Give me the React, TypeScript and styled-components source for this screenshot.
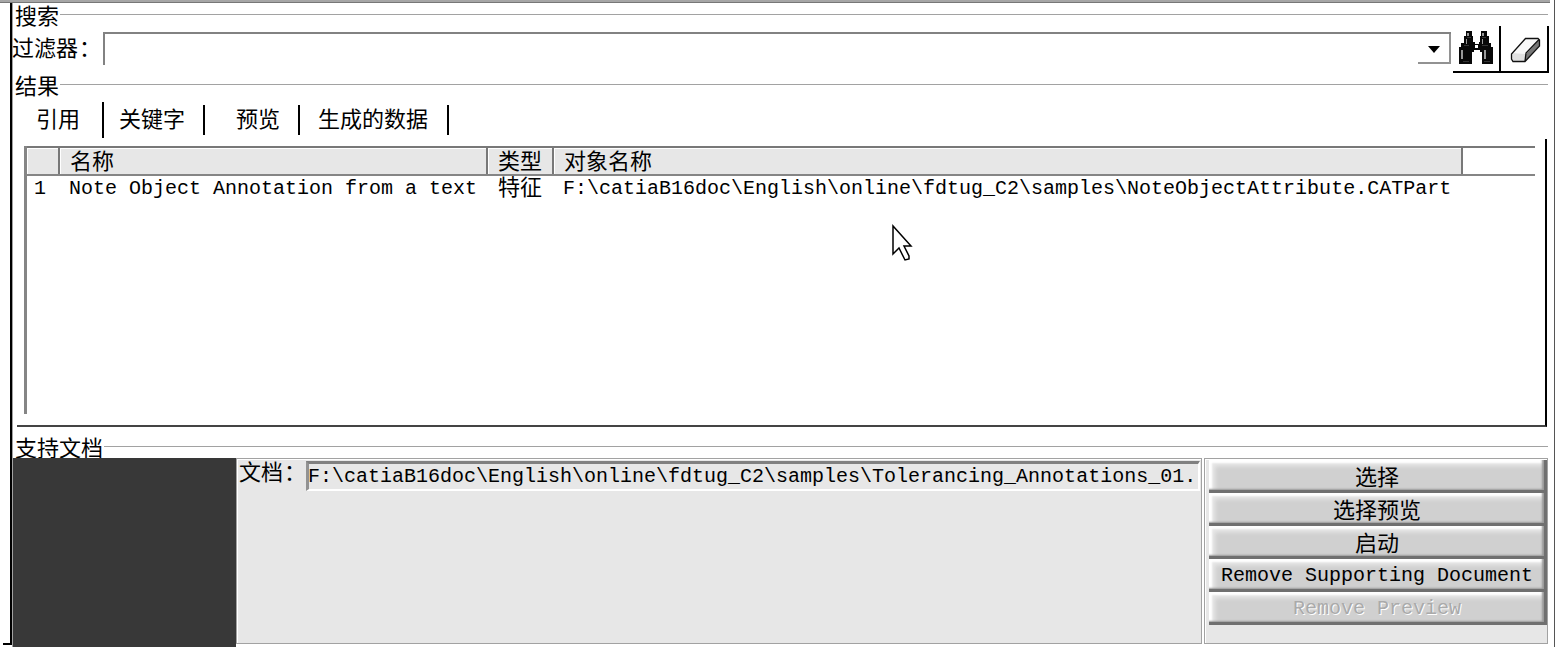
// Documentation search panel - filter bar, result table and supporting document actions
import React, { useState } from 'react';
import styled, { createGlobalStyle, css } from 'styled-components';

const COLORS = {
  face: '#e7e7e7',
  button: '#d0d0d0',
  line: '#a2a2a2',
  shadow: '#787878',
  dark: '#383838',
};

const GlobalStyle = createGlobalStyle`
  * {
    box-sizing: border-box;
  }

  body {
    margin: 0;
    background: #fff;
    color: #000;
    font-family: 'Liberation Mono', 'Noto Sans CJK SC', monospace;
    font-size: 20px;
    line-height: 22px;
    overflow: hidden;
  }
`;

// Window frame
const Window = styled.div`
  position: relative;
  width: 1555px;
  height: 647px;
  padding-left: 10px;
  border-right: 1px solid #555;
  overflow: hidden;
`;

const TopEdge = styled.div`
  height: 3px;
  margin: 0 4px 0 -10px;
  background: #a6a6a6;
  border-bottom: 1px solid #777;
`;

const Content = styled.div`
  height: 644px;
  padding-right: 6px;
  border-left: 2px solid #000;
  box-shadow: inset 1px 0 0 ${COLORS.line};
`;

const FrameCorner = styled.div`
  position: absolute;
  left: 3px;
  top: 643px;
  width: 9px;
  height: 4px;
  border-top: 2px solid #000;
  background: #fff;
`;

// CJK text is slightly larger than the latin text
const Cjk = styled.span`
  display: block;
  font-family: 'Noto Sans CJK SC', sans-serif;
  font-size: 22px;
  line-height: 18px;
  white-space: nowrap;
`;

const Colon = styled.span`
  margin-left: 1px;
`;

// Section title with a rule on the right
const SectionTitle = styled.div<{ $height: number; $gap?: number }>`
  display: flex;
  align-items: flex-start;
  height: ${({ $height }) => $height}px;
  padding: 2px 0 0 3px;
  margin-top: ${({ $gap = 0 }) => $gap}px;

  &::after {
    content: '';
    flex: 1;
    height: 1px;
    margin: 9px 0 0 1px;
    background: ${COLORS.line};
  }
`;

// Filter row
const FilterRow = styled.div`
  display: flex;
  height: 47px;
  margin-right: -1px;
`;

const FilterLabel = styled(Cjk)`
  width: 91px;
  padding: 11px 0 0 0;
`;

const ComboBox = styled.div`
  display: flex;
  justify-content: flex-end;
  width: 1348px;
  height: 33px;
  margin-top: 6px;
  border-top: 2px solid #828282;
  border-left: 2px solid #828282;
`;

const ComboArrow = styled.button`
  display: flex;
  align-items: flex-start;
  width: 33px;
  height: 30px;
  padding: 12px 0 0 10px;
  border: 0;
  border-right: 2px solid #929292;
  border-bottom: 2px solid #929292;
  background: #fff;
`;

const ToolButton = styled.button`
  width: 48px;
  height: 47px;
  padding: 0;
  border: 0;
  border-right: 2px solid #000;
  border-bottom: 2px solid #000;
  background: #fff;

  svg {
    display: block;
  }
`;

const Tools = styled.div`
  display: flex;
  margin-left: 2px;
`;

// Tabs
const TabBar = styled.div`
  display: flex;
  align-items: flex-start;
  height: 42px;
  padding-top: 8px;
`;

const Tab = styled.button<{ $width: number; $indent: number; $active: boolean }>`
  display: flex;
  align-items: flex-start;
  width: ${({ $width }) => $width}px;
  height: 30px;
  padding: 3px 0 0 ${({ $indent }) => $indent}px;
  border: 0;
  border-right: 2px solid #000;
  background: none;
  color: #000;

  ${({ $active }) => $active && css`
    height: 36px;
    margin-top: -3px;
    padding-top: 6px;
  `}
`;

// Result table
const ResultPane = styled.div`
  width: 1530px;
  height: 288px;
  margin-left: 5px;
  padding: 7px 0 0 7px;
  border-right: 2px solid #000;
  border-bottom: 2px solid #444;
`;

const Table = styled.div`
  width: 1511px;
  height: 268px;
  border-left: 3px solid #858585;
`;

const Row = styled.div`
  display: grid;
  grid-template-columns: 33px 428px 66px 909px 1fr;
  height: 26px;
  line-height: 24px;
  white-space: pre;
`;

const HeaderRow = styled(Row)`
  height: 30px;
  border-top: 2px solid ${COLORS.shadow};
  border-bottom: 2px solid #858585;
`;

const HeaderCell = styled.div`
  height: 26px;
  padding: 2px 0 0 10px;
  background: ${COLORS.face};
  border-right: 2px solid ${COLORS.shadow};
  box-shadow: inset 1px 1px 0 #fff;
`;

const Cell = styled.div<{ $indent: number }>`
  padding: 1px 0 0 ${({ $indent }) => $indent}px;

  ${Cjk} {
    margin-top: -1px;
  }
`;

// Supporting documents
const SupportArea = styled.div`
  position: relative;
  display: flex;
  align-items: flex-start;
  height: 189px;
  margin-left: 1px;
`;

const Thumbnail = styled.div`
  width: 223px;
  height: 189px;
  background: ${COLORS.dark};
`;

const Panel = styled.div`
  height: 186px;
  background: ${COLORS.face};
  border: 1px solid ${COLORS.line};
  box-shadow: inset 1px 1px 0 #fff;
`;

const DocumentPanel = styled(Panel)`
  display: flex;
  align-items: flex-start;
  width: 966px;
  padding: 2px 1px 0 2px;
`;

const DocumentLabel = styled(Cjk)`
  width: 67px;
`;

const DocumentField = styled.div`
  flex: 1;
  height: 30px;
  border-top: 3px solid #808080;
  border-left: 3px solid #929292;
  border-bottom: 2px solid #fff;
  border-right: 2px solid #fff;
  line-height: 26px;
  white-space: nowrap;
  overflow: hidden;
  text-indent: -1px;
`;

const ActionPanel = styled(Panel)`
  width: 344px;
  margin-left: 2px;
  padding: 1px 0 0 4px;
`;

const ActionButton = styled.button`
  display: flex;
  justify-content: center;
  align-items: flex-start;
  width: 338px;
  height: 33px;
  padding: 5px 2px 0 0;
  border: 0;
  background: ${COLORS.button};
  box-shadow:
    inset -3px -3px 0 #707070,
    inset -5px -4px 2px #999,
    inset 3px 3px 2px #fff,
    inset 6px 6px 4px #e8e8e8;
  color: #000;
  font-family: 'Liberation Mono', monospace;
  font-size: 20px;
  line-height: 24px;

  ${Cjk} {
    margin-top: 1px;
  }

  &:disabled {
    color: #aaa;
    text-shadow: 1px 1px 0 #fff;
  }
`;

const MousePointer = styled.svg`
  position: absolute;
  left: 890px;
  top: 223px;
`;

const BinocularsIcon = () => (
  <svg width="46" height="45" viewBox="0 0 46 45" shapeRendering="crispEdges">
    <path
      d="M13 5h6v5h1v6h2v2h4v-2h1v-6h1V5h6v5h2v7h2v4h2v17H29V26h-2v-2h-6v2h-2v12H6V21h2v-4h3v-7h2z"
      fill="#080808"
    />
    <path d="M22 19h3v3h-3z" fill="#fff" />
    <path d="M14 7h2v3h-2zM29 7h2v3h-2zM13 13h1v5h-1zM29 13h1v5h-1zM8 24h2v9H8zM31 24h2v9h-2z" fill="#999" />
    <path d="M14 11h4v1h-4zM29 11h4v1h-4zM11 19h5v1h-5zM29 19h6v1h-6zM10 35h6v1h-6zM31 35h6v1h-6z" fill="#333" />
  </svg>
);

const EraserIcon = () => (
  <svg width="46" height="45" viewBox="0 0 46 45">
    <path d="M24 12.500h14L25 27.500H10.500z" fill="#f8f8f8" />
    <path d="M11 27l14 1-1 7H12l-1-2z" fill="#e1e1e1" />
    <path d="M25 28l13-14v6L24 35z" fill="#777" />
    <path
      d="M24.500 12.500H37l1.500 1.500v6L24 35.500H12L10.500 33v-5zM24 35l1-8L38 13.500"
      fill="none"
      stroke="#111"
      strokeWidth="1.3"
    />
  </svg>
);

const TABS = [
  { label: '引用', width: 92, indent: 24 },
  { label: '关键字', width: 101, indent: 15 },
  { label: '预览', width: 95, indent: 31 },
  { label: '生成的数据', width: 149, indent: 18 },
];

const ACTIONS = [
  { label: '选择', cjk: true },
  { label: '选择预览', cjk: true },
  { label: '启动', cjk: true },
  { label: 'Remove Supporting Document' },
  { label: 'Remove Preview', disabled: true },
];

export default function App() {
  const [activeTab, setActiveTab] = useState(0);

  return (
    <>
      <GlobalStyle />
      <Window>
        <TopEdge />
        <Content>
          <SectionTitle $height={23}>
            <Cjk>搜索</Cjk>
          </SectionTitle>

          {/* Filter */}
          <FilterRow>
            <FilterLabel>过滤器<Colon>：</Colon></FilterLabel>
            <ComboBox>
              <ComboArrow aria-label="过滤器">
                <svg width="12" height="7" viewBox="0 0 12 7">
                  <path d="M0 0h12L6 7z" />
                </svg>
              </ComboArrow>
            </ComboBox>
            <Tools>
              <ToolButton>
                <BinocularsIcon />
              </ToolButton>
              <ToolButton>
                <EraserIcon />
              </ToolButton>
            </Tools>
          </FilterRow>

          <SectionTitle $height={24}>
            <Cjk>结果</Cjk>
          </SectionTitle>

          {/* Result tabs */}
          <TabBar>
            {TABS.map((tab, index) => (
              <Tab
                key={tab.label}
                $width={tab.width}
                $indent={tab.indent}
                $active={index === activeTab}
                onClick={() => setActiveTab(index)}
              >
                <Cjk>{tab.label}</Cjk>
              </Tab>
            ))}
          </TabBar>

          <ResultPane>
            <Table>
              <HeaderRow>
                <HeaderCell />
                <HeaderCell><Cjk>名称</Cjk></HeaderCell>
                <HeaderCell><Cjk>类型</Cjk></HeaderCell>
                <HeaderCell><Cjk>对象名称</Cjk></HeaderCell>
              </HeaderRow>
              <Row>
                <Cell $indent={7}>1</Cell>
                <Cell $indent={9}>Note Object Annotation from a text</Cell>
                <Cell $indent={10}><Cjk>特征</Cjk></Cell>
                <Cell $indent={9}>
                  F:\catiaB16doc\English\online\fdtug_C2\samples\NoteObjectAttribute.CATPart
                </Cell>
              </Row>
            </Table>
          </ResultPane>

          <SectionTitle $height={23} $gap={8}>
            <Cjk>支持文档</Cjk>
          </SectionTitle>

          {/* Supporting document */}
          <SupportArea>
            <Thumbnail />
            <DocumentPanel>
              <DocumentLabel>文档<Colon>：</Colon></DocumentLabel>
              <DocumentField>
                F:\catiaB16doc\English\online\fdtug_C2\samples\Tolerancing_Annotations_01.
              </DocumentField>
            </DocumentPanel>
            <ActionPanel>
              {ACTIONS.map(action => (
                <ActionButton key={action.label} disabled={action.disabled}>
                  {action.cjk ? <Cjk>{action.label}</Cjk> : action.label}
                </ActionButton>
              ))}
            </ActionPanel>
          </SupportArea>
        </Content>

        <FrameCorner />
        <MousePointer width="24" height="40" viewBox="0 0 24 40">
          <path
            d="M3 3v28l6-6 6 12 4-1v-3l-5-10h7z"
            fill="#fff"
            stroke="#000"
            strokeWidth="1.5"
          />
        </MousePointer>
      </Window>
    </>
  );
}
